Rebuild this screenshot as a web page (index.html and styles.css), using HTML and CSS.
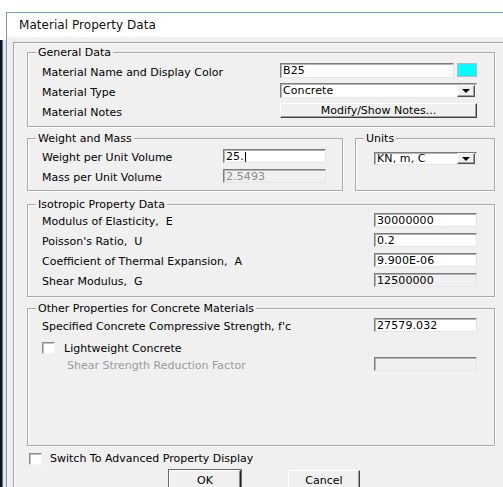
FILE: index.html
```html
<!DOCTYPE html>
<html lang="en">
<head>
<meta charset="utf-8">
<title>Material Property Data</title>
<link rel="stylesheet" href="styles.css">
</head>
<body>
<div class="screen">
  <div class="edge"></div>
  <div class="window">
    <div class="titlebar"><span class="title">Material Property Data</span></div>
    <div class="client">
      <div class="panel">

        <div class="group general">
          <span class="legend">General Data</span>
          <div class="row">
            <span class="label">Material Name and Display Color</span>
            <div class="ctrl name-ctrl">
              <span class="field name-field">B25</span>
              <span class="swatch"></span>
            </div>
          </div>
          <div class="row">
            <span class="label">Material Type</span>
            <div class="ctrl">
              <span class="field combo"><span class="combo-text">Concrete</span><span class="drop"><span class="tri"></span></span></span>
            </div>
          </div>
          <div class="row">
            <span class="label">Material Notes</span>
            <div class="ctrl">
              <button class="btn notes-btn" type="button">Modify/Show Notes...</button>
            </div>
          </div>
        </div>

        <div class="pair">
          <div class="group weight">
            <span class="legend">Weight and Mass</span>
            <div class="row">
              <span class="label">Weight per Unit Volume</span>
              <span class="field small">25.<span class="caret"></span></span>
            </div>
            <div class="row">
              <span class="label">Mass per Unit Volume</span>
              <span class="field small disabled dim">2.5493</span>
            </div>
          </div>
          <div class="group units">
            <span class="legend">Units</span>
            <span class="field combo small"><span class="combo-text">KN, m, C</span><span class="drop"><span class="tri"></span></span></span>
          </div>
        </div>

        <div class="group iso">
          <span class="legend">Isotropic Property Data</span>
          <div class="row">
            <span class="label">Modulus of Elasticity,&nbsp; E</span>
            <span class="field small">30000000</span>
          </div>
          <div class="row">
            <span class="label">Poisson's Ratio,&nbsp; U</span>
            <span class="field small">0.2</span>
          </div>
          <div class="row">
            <span class="label">Coefficient of Thermal Expansion,&nbsp; A</span>
            <span class="field small">9.900E-06</span>
          </div>
          <div class="row">
            <span class="label">Shear Modulus,&nbsp; G</span>
            <span class="field small disabled">12500000</span>
          </div>
        </div>

        <div class="group other">
          <span class="legend">Other Properties for Concrete Materials</span>
          <div class="row">
            <span class="label">Specified Concrete Compressive Strength, f'c</span>
            <span class="field small">27579.032</span>
          </div>
          <div class="row check-line">
            <span class="box"></span>
            <span class="check-text">Lightweight Concrete</span>
          </div>
          <div class="row reduce">
            <span class="label grey">Shear Strength Reduction Factor</span>
            <span class="field small disabled"></span>
          </div>
        </div>

        <div class="switch-row">
          <span class="box"></span>
          <span class="check-text">Switch To Advanced Property Display</span>
        </div>

        <div class="buttons">
          <button class="btn push default" type="button">OK</button>
          <button class="btn push" type="button">Cancel</button>
        </div>

      </div>
    </div>
  </div>
</div>
</body>
</html>
```

FILE: styles.css
```css
html, body {
  margin: 0;
  padding: 0;
  background: #fff;
}

.screen {
  display: flex;
  width: 503px;
  height: 487px;
  overflow: hidden;
  background: #fff;
  font-family: "DejaVu Sans", sans-serif;
  font-size: 11px;
  color: #000;
}

/* desktop sliver left of the dialog */
.edge {
  width: 6px;
  flex: none;
  background:
    linear-gradient(to bottom, #fff 0 40px, transparent 40px),
    linear-gradient(to right, #141414 0 2px, #2f7ad4 2px 3px, #e6e6e6 3px 6px);
}

.window {
  flex: 1;
  margin-top: 12px;
  border-top: 1px solid #62a6e2;
  border-left: 1px solid #8a939c;
  display: flex;
  flex-direction: column;
  background: #f0f0f0;
}

.titlebar {
  height: 24px;
  flex: none;
  background: #fff;
  padding-left: 12px;
  display: flex;
  align-items: center;
}

.title {
  font-size: 12px;
  color: #111;
  letter-spacing: 0.05px;
}

.client {
  flex: 1;
  padding: 5px 0 0 6px;
  display: flex;
}

.panel {
  flex: 1;
  border-top: 1px solid #a0a0a0;
  border-left: 1px solid #a0a0a0;
  box-shadow: inset 1px 1px 0 #fff;
  padding: 9px 0 0 13px;
}

/* etched group frame */
.group {
  position: relative;
  box-sizing: border-box;
  width: 468px;
  border: 1px solid #a9a9a9;
  box-shadow: 1px 1px 0 #fff, inset 1px 1px 0 #fff;
}

.legend {
  position: absolute;
  top: -7px;
  left: 8px;
  padding: 0 2px;
  line-height: 13px;
  background: #f0f0f0;
  white-space: nowrap;
}

.row {
  display: flex;
  align-items: center;
  height: 14px;
}

/* label text sits slightly below the field centre */
.label {
  white-space: nowrap;
  line-height: 14px;
  padding-top: 2px;
  margin-bottom: -2px;
  flex: none;
}

.grey {
  color: #9a9a9a;
}

/* General Data */
.general {
  padding: 10px 17px 8px 14px;
  display: flex;
  flex-direction: column;
  gap: 5px;
}

.general .row {
  height: 15px;
}

.general .label {
  width: 238px;
}

.ctrl {
  width: 197px;
  height: 15px;
  display: flex;
}

.name-ctrl {
  gap: 3px;
}

/* sunken edit field */
.field {
  box-sizing: border-box;
  display: flex;
  align-items: center;
  height: 14px;
  padding: 1px 0 0 2px;
  background: #fff;
  border: 1px solid;
  border-color: #7c7c7c #e6e6e6 #e6e6e6 #7c7c7c;
  box-shadow: inset 1px 1px 0 #b4b4b4;
  white-space: nowrap;
  line-height: 12px;
  letter-spacing: 0.1px;
}

.general .field {
  height: 15px;
}

.name-field {
  flex: 1;
}

.swatch {
  width: 20px;
  height: 14px;
  box-sizing: border-box;
  background: #00ffff;
  border: 1px solid #b8b8b8;
}

.combo {
  flex: 1;
  justify-content: space-between;
  padding-right: 1px;
}

.drop {
  box-sizing: border-box;
  width: 18px;
  height: 12px;
  display: flex;
  align-items: center;
  justify-content: center;
  background: #f0f0f0;
  border: 1px solid;
  border-color: #fff #505050 #505050 #fff;
  box-shadow: inset -1px -1px 0 #a0a0a0;
  margin-top: -1px;
}

.tri {
  width: 0;
  height: 0;
  border-left: 4px solid transparent;
  border-right: 4px solid transparent;
  border-top: 4px solid #000;
  margin-top: 1px;
}

/* raised push button */
.btn {
  font-family: "DejaVu Sans", sans-serif;
  font-size: 11px;
  color: #000;
  background: #f0f0f0;
  border: 1px solid;
  border-color: #fff #404040 #404040 #fff;
  box-shadow: inset -1px -1px 0 #a0a0a0;
  padding: 0;
  margin: 0;
  line-height: 12px;
}

.notes-btn {
  width: 197px;
  height: 15px;
}

/* Weight / Units pair */
.pair {
  display: flex;
  gap: 12px;
  margin-top: 11px;
}

.weight {
  width: 316px;
  padding: 10px 16px 7px 14px;
  display: flex;
  flex-direction: column;
  gap: 6px;
}

.weight .label {
  width: 181px;
}

.field.small {
  width: 103px;
  flex: none;
  height: 14px;
}

.disabled {
  background: #f0f0f0;
}

.dim {
  color: #8a8a8a;
}

.caret {
  display: inline-block;
  width: 1px;
  height: 10px;
  background: #000;
  margin-left: 1px;
}

.units {
  width: 140px;
  padding: 13px 0 0 18px;
}

.units .combo {
  height: 13px;
}

.units .drop {
  height: 11px;
}

/* Isotropic */
.iso {
  margin-top: 13px;
  padding: 8px 16px 9px 14px;
  display: flex;
  flex-direction: column;
  gap: 6px;
}

.iso .label,
.other .label {
  width: 332px;
}

/* Other properties */
.other {
  margin-top: 11px;
  height: 138px;
  padding: 9px 16px 0 14px;
}

.check-line {
  margin-top: 9px;
}

.reduce {
  margin-top: 2px;
}

.reduce .label {
  padding-left: 25px;
  width: 307px;
}

.box {
  box-sizing: border-box;
  width: 13px;
  height: 12px;
  flex: none;
  background: #fff;
  border: 1px solid;
  border-color: #8a8a8a #f4f4f4 #f4f4f4 #8a8a8a;
  box-shadow: inset 1px 1px 0 #c0c0c0;
}

.check-text {
  margin-left: 9px;
  line-height: 14px;
  padding-top: 1px;
  white-space: nowrap;
}

.switch-row {
  display: flex;
  align-items: center;
  margin: 6px 0 0 2px;
  height: 13px;
}

.switch-row .check-text {
  margin-left: 8px;
}

.buttons {
  display: flex;
  gap: 47px;
  margin: 5px 0 0 142px;
}

.push {
  width: 72px;
  height: 21px;
  line-height: 17px;
}

.default {
  border-color: #fff #202020 #202020 #fff;
  box-shadow: inset -1px -1px 0 #8a8a8a;
  outline: 1px solid #6a6a6a;
  outline-offset: 0;
}
```
